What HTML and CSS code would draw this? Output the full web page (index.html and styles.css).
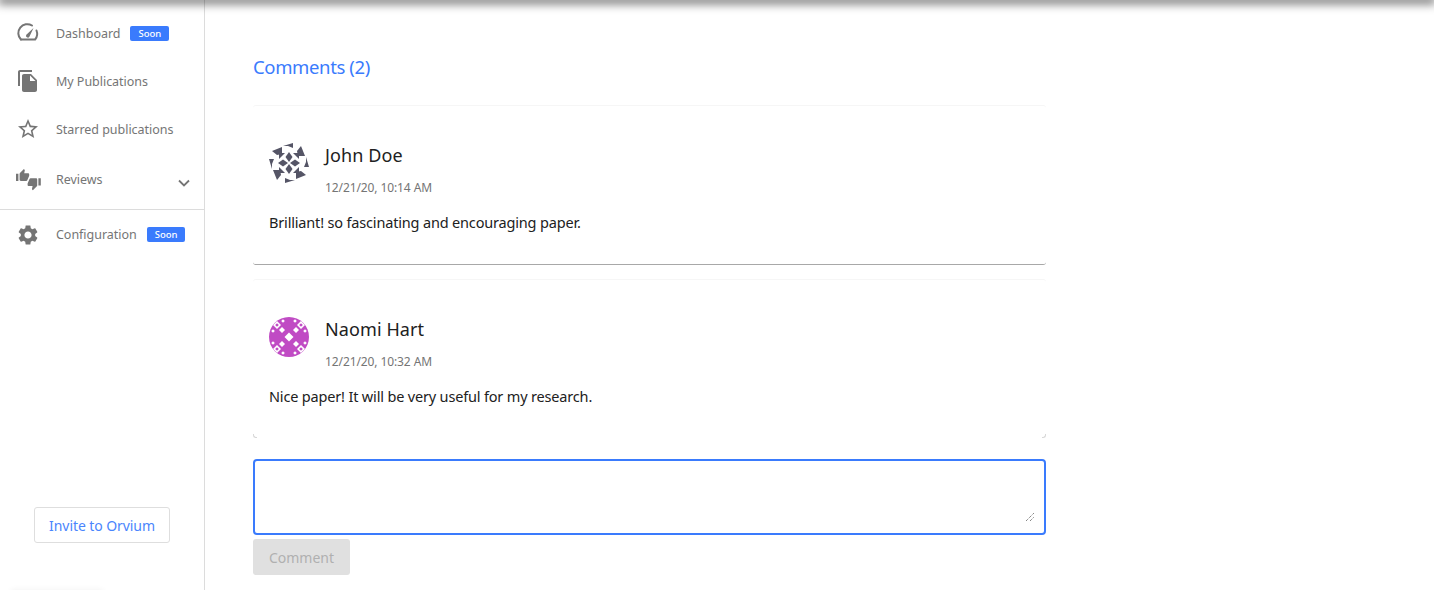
FILE: index.html
```html
<!DOCTYPE html>
<html lang="en">
<head>
<meta charset="utf-8">
<title>Comments</title>
<link rel="stylesheet" href="styles.css">
</head>
<body>
<div class="topshadow"></div>
<div class="bottomglow"></div>
<div class="page">
  <aside class="sidebar">
    <nav class="nav">
      <a class="item">
        <svg class="icon" viewBox="0 0 24 24"><path d="M4.900 18.500H19.100A9 9 0 0 0 20.500 9.500" fill="none" stroke="#757575" stroke-width="2" stroke-linecap="round"/><path d="M4.900 18.500A9 9 0 0 1 16 4.500" fill="none" stroke="#757575" stroke-width="2" stroke-linecap="round"/><path d="M10.300 13.800L17.500 7 13.400 15.800a1.700 1.700 0 0 1-3.100-2z" fill="#757575"/></svg>
        <span class="label">Dashboard</span><span class="soon">Soon</span>
      </a>
      <a class="item">
        <svg class="icon" viewBox="0 0 24 24"><path fill="#757575" d="M16 1H4c-1.100 0-2 .9-2 2v14h2V3h12V1zm-1 4l6 6v10c0 1.100-.9 2-2 2H7.990C6.890 23 6 22.100 6 21l.01-14c0-1.100.89-2 1.990-2h7zm-1 7h5.500L14 6.500V12z"/></svg>
        <span class="label">My Publications</span>
      </a>
      <a class="item">
        <svg class="icon" viewBox="0 0 24 24"><path fill="#757575" d="M22 9.240l-7.190-.62L12 2 9.190 8.630 2 9.240l5.460 4.730L5.820 21 12 17.270 18.180 21l-1.630-7.030L22 9.240zM12 15.400l-3.760 2.270 1-4.280-3.320-2.880 4.380-.38L12 6.100l1.710 4.040 4.380.38-3.320 2.880 1 4.280L12 15.400z"/></svg>
        <span class="label">Starred publications</span>
      </a>
      <a class="item item-reviews">
        <svg class="icon icon-reviews" viewBox="0 0 26 26"><g fill="#757575"><path transform="translate(.4 2.400) scale(.6)" d="M1 21h4V9H1v12zm22-11c0-1.100-.9-2-2-2h-6.310l.95-4.570.03-.32c0-.41-.17-.79-.44-1.060L14.170 1 7.590 7.590C7.220 7.950 7 8.450 7 9v10c0 1.100.9 2 2 2h9c.83 0 1.540-.5 1.840-1.220l3.020-7.050c.09-.23.14-.47.14-.73v-2z"/><path transform="translate(12 10.500) scale(.6)" d="M15 3H6c-.83 0-1.540.5-1.840 1.220l-3.020 7.050c-.09.23-.14.47-.14.73v2c0 1.100.9 2 2 2h6.310l-.95 4.570-.03.32c0 .41.17.79.44 1.060L9.830 23l6.590-6.590c.36-.36.58-.86.58-1.410V5c0-1.100-.9-2-2-2zm4 0v12h4V3h-4z"/></g></svg>
        <span class="label">Reviews</span>
        <svg class="chevron" viewBox="0 0 12 8"><path d="M1 1.500l5 5 5-5" fill="none" stroke="#757575" stroke-width="1.800"/></svg>
      </a>
      <a class="item item-config">
        <svg class="icon" viewBox="0 0 24 24"><path fill="#757575" d="M19.140 12.940c.04-.3.06-.61.06-.94 0-.32-.02-.64-.07-.94l2.030-1.580c.18-.14.23-.41.12-.61l-1.920-3.320c-.12-.22-.37-.29-.59-.22l-2.390.96c-.5-.38-1.030-.7-1.620-.94l-.36-2.540c-.04-.24-.24-.41-.48-.41h-3.840c-.24 0-.43.17-.47.41l-.36 2.540c-.59.24-1.130.57-1.620.94l-2.390-.96c-.22-.08-.47 0-.59.22L2.740 8.870c-.12.21-.08.47.12.61l2.030 1.580c-.05.3-.09.63-.09.94s.02.64.07.94l-2.030 1.580c-.18.14-.23.41-.12.61l1.920 3.320c.12.22.37.29.59.22l2.390-.96c.5.38 1.030.7 1.620.94l.36 2.540c.05.24.24.41.48.41h3.840c.24 0 .44-.17.47-.41l.36-2.540c.59-.24 1.130-.56 1.620-.94l2.390.96c.22.08.47 0 .59-.22l1.920-3.320c.12-.22.07-.47-.12-.61l-2.010-1.580zM12 15.600c-1.980 0-3.600-1.620-3.600-3.600s1.620-3.600 3.600-3.600 3.600 1.620 3.600 3.600-1.620 3.600-3.600 3.600z"/></svg>
        <span class="label">Configuration</span><span class="soon">Soon</span>
      </a>
    </nav>
    <button class="invite">Invite to Orvium</button>
  </aside>
  <main class="main">
    <h2 class="title">Comments (2)</h2>
    <section class="card card-dark">
      <div class="head">
        <svg class="avatar" viewBox="0 0 40 40">
          <defs>
            <g id="q">
              <path d="M14 3L24 0v5l-5-2z"/>
              <path d="M3 8L13 4v7l-5 1z"/>
              <path d="M20 9l3.500 5L20 19l-3.500-5z"/>
              <path d="M10 10h6l-6 6z"/>
            </g>
          </defs>
          <g fill="#555566">
            <use href="#q"/><use href="#q" transform="rotate(90 20 20)"/><use href="#q" transform="rotate(180 20 20)"/><use href="#q" transform="rotate(270 20 20)"/>
          </g>
        </svg>
        <div>
          <div class="name">John Doe</div>
          <div class="date">12/21/20, 10:14 AM</div>
        </div>
      </div>
      <p class="text">Brilliant! so fascinating and encouraging paper.</p>
    </section>
    <section class="card">
      <div class="head">
        <svg class="avatar" viewBox="0 0 40 40">
          <defs>
            <clipPath id="c"><circle cx="20" cy="20" r="20"/></clipPath>
            <path id="w" d="M0-3L3 0 0 3-3 0z" fill="#fff"/>
            <path id="s" d="M0-1.800L1.800 0 0 1.800-1.800 0z" fill="#fff"/>
            <path id="b" d="M0-4.500L4.500 0 0 4.500-4.500 0z" fill="#fff"/>
            <g id="r"><path d="M0-4L4 0 0 4-4 0z" fill="#fff"/><path d="M0-1.800L1.800 0 0 1.800-1.800 0z" fill="#c04bc4"/></g>
          </defs>
          <g clip-path="url(#c)">
            <rect width="40" height="40" fill="#c04bc4"/>
            <use href="#b" x="20" y="20"/>
            <use href="#w" x="13" y="13"/><use href="#w" x="27" y="13"/><use href="#w" x="13" y="27"/><use href="#w" x="27" y="27"/>
            <use href="#r" x="8" y="8"/><use href="#r" x="32" y="8"/><use href="#r" x="8" y="32"/><use href="#r" x="32" y="32"/>
            <use href="#s" x="14" y="4"/><use href="#s" x="26" y="4"/><use href="#s" x="14" y="36"/><use href="#s" x="26" y="36"/>
            <use href="#s" x="4" y="14"/><use href="#s" x="4" y="26"/><use href="#s" x="36" y="14"/><use href="#s" x="36" y="26"/>
          </g>
        </svg>
        <div>
          <div class="name">Naomi Hart</div>
          <div class="date">12/21/20, 10:32 AM</div>
        </div>
      </div>
      <p class="text">Nice paper! It will be very useful for my research.</p>
    </section>
    <div class="boxwrap">
      <textarea class="box"></textarea>
      <svg class="grip" viewBox="0 0 8 8"><path d="M0 8L8 0M4 8L8 4" stroke="#555" stroke-width="1" stroke-dasharray="1 1" fill="none"/></svg>
    </div>
    <button class="send" disabled>Comment</button>
  </main>
</div>
</body>
</html>
```
FILE: styles.css
```css
* { box-sizing: border-box; }
html, body { margin: 0; height: 590px; overflow: hidden; background: #fff; }
body { font-family: "Noto Sans", "Open Sans", sans-serif; color: #212121; position: relative; }
.topshadow { position: absolute; left: 0; right: 0; top: -4px; height: 4px; box-shadow: 0 2px 10px 2px rgba(0,0,0,.55); z-index: 2; }
.bottomglow { position: absolute; left: 12px; width: 90px; bottom: -6px; height: 5px; box-shadow: 0 0 6px 1px rgba(0,0,0,.06); }
.page { display: flex; height: 590px; }
.sidebar { width: 205px; flex: none; border-right: 1px solid #dcdcdc; display: flex; flex-direction: column; align-items: stretch; padding-top: 9px; }
.nav { display: flex; flex-direction: column; }
.item { display: flex; align-items: center; height: 48px; padding-left: 16px; color: #757575; font-size: 12.500px; letter-spacing: -.03px; }
.item-reviews { height: 56px; padding-bottom: 4px; }
.item-config { border-top: 1px solid #dcdcdc; height: 50px; }
.icon { width: 24px; height: 24px; flex: none; margin-right: 16px; }
.icon-reviews { width: 26px; height: 26px; margin-left: -1px; margin-right: 15px; }
.soon { background: #3a7bfd; color: #fff; font-size: 9.500px; font-weight: 500; line-height: 15px; height: 15px; padding: 0 8px; border-radius: 2px; margin-left: 10px; letter-spacing: 0; }
.chevron { width: 12px; height: 8px; margin-left: auto; margin-right: 14px; margin-top: 8px; }
.invite { margin: auto 34px 47px; width: 136px; height: 36px; background: #fff; border: 1px solid #dedede; border-radius: 3px; color: #4a85fd; font: 14px "Noto Sans", sans-serif; letter-spacing: -.08px; padding: 0; }
.main { width: 841px; padding: 0 0 0 48px; display: flex; flex-direction: column; align-items: stretch; }
.title { margin: 53px 0 25px; font-size: 18.500px; line-height: 27px; font-weight: 400; color: #3a7bfd; letter-spacing: -.37px; }
.card { position: relative; height: 159px; margin-bottom: 15px; padding: 37px 16px 0; border-top: 1px solid #f6f6f6; border-radius: 3px; }
.card::before, .card::after { content: ""; position: absolute; bottom: 0; width: 3px; height: 3px; border-bottom: 1px solid #d8d8d8; }
.card::before { left: 0; border-left: 1px solid #d8d8d8; border-bottom-left-radius: 3px; }
.card::after { right: 0; border-right: 1px solid #d8d8d8; border-bottom-right-radius: 3px; }
.card-dark { height: 160px; margin-bottom: 14px; border-bottom: 1px solid #a8a8a8; }
.card-dark::before, .card-dark::after { display: none; }
.head { display: flex; gap: 16px; }
.avatar { width: 40px; height: 40px; flex: none; }
.name { font-size: 18px; line-height: 24px; letter-spacing: .1px; }
.date { font-size: 12px; line-height: 16px; margin-top: 13px; color: #757575; letter-spacing: -.1px; }
.text { margin: 15px 0 0; font-size: 14.500px; line-height: 22px; letter-spacing: -.17px; }
.boxwrap { position: relative; margin-top: 6px; height: 76px; }
.box { display: block; width: 100%; height: 76px; border: 2px solid #3a7bfd; border-radius: 4px; outline: 0; background: #fff; resize: none; }
.grip { position: absolute; right: 12px; bottom: 14px; width: 8px; height: 8px; }
.send { align-self: flex-start; width: 97px; height: 36px; margin-top: 4px; border: 0; border-radius: 3px; background: #e0e0e0; color: #b0b0b0; font: 14px "Noto Sans", sans-serif; padding: 0; }
```
